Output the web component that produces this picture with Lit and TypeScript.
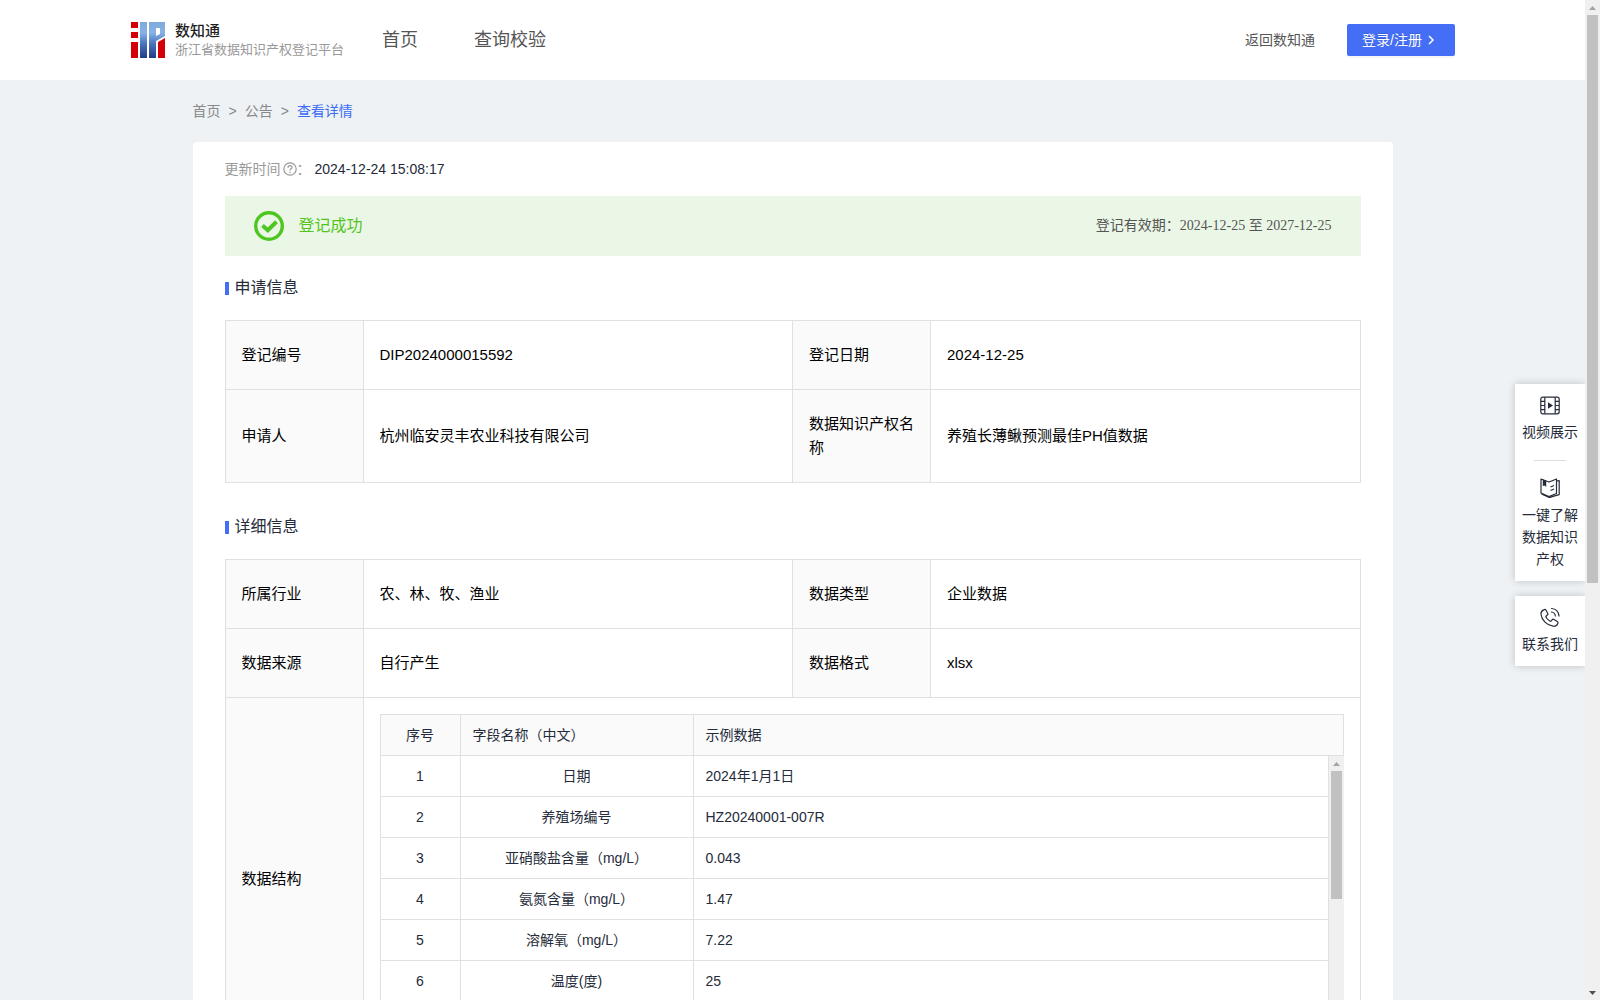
import { LitElement, html, css, svg } from "lit";
import { customElement } from "lit/decorators.js";
import { styleMap } from "lit/directives/style-map.js";

interface FieldRow {
  name: string;
  sample: string;
}

const FIELDS: FieldRow[] = [
  { name: "日期", sample: "2024年1月1日" },
  { name: "养殖场编号", sample: "HZ20240001-007R" },
  { name: "亚硝酸盐含量（mg/L）", sample: "0.043" },
  { name: "氨氮含量（mg/L）", sample: "1.47" },
  { name: "溶解氧（mg/L）", sample: "7.22" },
  { name: "温度(度)", sample: "25" },
];

const icons = {
  logo: svg`<svg class="logo" viewBox="0 0 34 36" aria-hidden="true">
    <defs><linearGradient id="lg" x1="0" y1="0" x2="0" y2="1">
      <stop offset="0" stop-color="#7fa9dc"/><stop offset=".3" stop-color="#86b2e6"/><stop offset=".6" stop-color="#4a74bd"/><stop offset="1" stop-color="#233a86"/>
    </linearGradient></defs>
    <path fill="#d40008" d="M0 0h7v6H0zM0 10h7v6H0zM0 20h7v16H0z"/>
    <path fill="url(#lg)" fill-rule="evenodd" d="M9 0h7v36H9zM18 0h16v14L25 19V36h-7zM25 6v8l4-2V6z"/>
    <path fill="#d40008" d="M27 20l7-4v20h-7z"/>
  </svg>`,
  chevron: svg`<svg class="chevron" viewBox="0 0 8 10" aria-hidden="true"><path d="M2 1l4 4-4 4" fill="none" stroke="currentColor" stroke-width="1.500"/></svg>`,
  help: svg`<svg class="help" viewBox="0 0 14 14" aria-hidden="true">
    <g fill="none" stroke="currentColor" stroke-width="1.200"><circle cx="7" cy="7" r="6.200"/><path d="M5 5.700c0-2.900 4-2.700 4-.3 0 1.400-2 1.500-2 3"/></g><circle cx="7" cy="10.200" r=".8" fill="currentColor"/>
  </svg>`,
  success: svg`<svg class="success" viewBox="0 0 30 30" aria-hidden="true">
    <circle cx="15" cy="15" r="13.300" fill="none" stroke="currentColor" stroke-width="3.400"/>
    <path d="M8.500 14.500l5.300 4.700 8.700-8.500" fill="none" stroke="currentColor" stroke-width="4"/>
  </svg>`,
  video: svg`<svg class="side-icon" viewBox="0 0 20 20" aria-hidden="true">
    <g fill="none" stroke="currentColor" stroke-width="1.200"><rect x=".8" y="2.200" width="18.400" height="16.600" rx="2"/><path d="M4.800 2.200v16.400M15.200 2.200v16.400M1 6.400h3.800M1 10.500h3.800M1 14.600h3.800M15.200 6.400H19M15.200 10.500H19M15.200 14.600H19"/></g>
    <path d="M8 7.300l5 3.200-5 3.200z" fill="currentColor"/>
  </svg>`,
  book: svg`<svg class="side-icon" viewBox="0 0 20 20" aria-hidden="true">
    <g fill="none" stroke="currentColor" stroke-width="1.200" stroke-linejoin="round"><path d="M1 1l8 3 7.500-3v14.500L9 18.500l-8-3.500zM16.500 3l2.700-.4v14L13 18.400l-3.500 1.200L1.500 16M10.500 9l3.500-1.500M10.500 12.500l3.500-1.500"/></g>
    <path d="M2.800 1.500l3.400 1.300V9L4.500 7.500 2.800 8z" fill="currentColor"/>
  </svg>`,
  phone: svg`<svg class="side-icon" viewBox="0 0 20 20" aria-hidden="true">
    <g fill="none" stroke="currentColor" stroke-width="1.200" stroke-linecap="round" stroke-linejoin="round"><path d="M4.300 2.600c-2 .7-3.500 2.400-3.300 4.600.6 6 6 11.200 12 12 2.400.3 4.300-1.200 4.900-3 .2-.8 0-1.300-.6-1.700l-3.300-2c-.7-.4-1.400-.3-1.900.3l-.9 1.100c-.4.4-.8.5-1.300.2-1.600-1-3.200-2.300-4-4-.2-.5-.1-.9.300-1.200l1.100-.8c.6-.5.800-1.200.4-1.800L6 3.200c-.4-.6-1-.9-1.700-.6z"/><path d="M11.500 5c2.200.3 3.600 1.700 3.900 4M11.500 1.500c4.500.3 7 3 7.500 7.500"/></g>
  </svg>`,
};

@customElement("scroll-track")
export class ScrollTrack extends LitElement {
  static properties = { thumb: { type: Number }, down: { type: Boolean } };
  declare thumb: number;
  declare down: boolean;

  static styles = css`
    :host { display: flex; flex-direction: column; width: 15px; background: #f0f0f0; }
    .end { flex: none; height: 15px; display: flex; align-items: center; justify-content: center; }
    .end svg { width: 7px; height: 4px; display: block; }
    .up { color: #a3a3a3; }
    .dn { color: #505050; }
    .lane { flex: 1; min-height: 0; padding: 0 2px; }
    .thumb { background: #c1c1c1; }
  `;

  render() {
    return html`
      <div class="end up"><svg viewBox="0 0 7 4"><path d="M3.500 0L7 4H0z" fill="currentColor"/></svg></div>
      <div class="lane"><div class="thumb" style=${styleMap({ height: `${this.thumb}%` })}></div></div>
      ${this.down ? html`<div class="end dn"><svg viewBox="0 0 7 4"><path d="M0 0h7L3.500 4z" fill="currentColor"/></svg></div>` : ""}
    `;
  }
}

@customElement("app-root")
export class AppRoot extends LitElement {
  static styles = css`
    :host {
      display: flex; height: 100vh; position: relative; overflow: hidden;
      font-family: "Liberation Sans", "Noto Sans CJK SC", sans-serif;
      font-size: 14px; line-height: 22px; color: #252b3a; background: #eef2f5;
    }
    * { box-sizing: border-box; }
    a { color: inherit; text-decoration: none; }
    svg { display: block; flex: none; }
    .page { flex: 1; min-width: 0; overflow-y: auto; scrollbar-width: none; }

    .header { height: 80px; background: #fff; display: flex; align-items: center; padding: 0 130px 0 131px; color: #555; }
    .brand { display: flex; align-items: center; gap: 10px; width: 251px; white-space: nowrap; }
    .logo { width: 34px; height: 36px; }
    .brand-name { font-size: 15px; line-height: 20px; font-weight: 500; color: #1f1f1f; }
    .brand-sub { font-size: 13px; line-height: 18px; color: #999; }
    .nav { display: flex; gap: 56px; font-size: 18px; flex: 1; }
    .login {
      margin-left: 32px; width: 108px; height: 32px; padding: 0 15px; border: 0; border-radius: 2px;
      display: flex; align-items: center; gap: 5px; background: #446ef5; color: #fff; font: inherit;
      white-space: nowrap; box-shadow: 0 2px 0 rgba(0, 0, 0, 0.04); text-shadow: 0 -1px 0 rgba(0, 0, 0, 0.12);
    }
    .chevron { width: 8px; height: 10px; }

    .content { max-width: 1200px; margin: 0 auto; }
    .crumbs { display: flex; gap: 8px; padding: 20px 0; color: #888; }
    .crumbs .current { color: #3a6cf6; }
    .card { background: #fff; border-radius: 4px; padding: 16px 32px 32px; }
    .updated { display: flex; align-items: center; color: #999; }
    .help { width: 14px; height: 14px; margin-left: 2px; }
    .updated time { color: #252b3a; margin-left: 4px; }
    .banner {
      margin-top: 16px; height: 60px; padding: 0 29px; background: #ebf7e6;
      display: flex; align-items: center; gap: 15px; color: #52c41a; font-size: 16px;
    }
    .success { width: 30px; height: 30px; color: #4dc61f; }
    .validity {
      margin-left: auto; font-size: 14px; color: #555;
      font-family: "Liberation Serif", "Noto Sans CJK SC", serif;
    }
    .section-title {
      margin: 20px 0; display: flex; align-items: center; gap: 6px;
      font-size: 16px; line-height: 24px; font-weight: 400;
    }
    .section-title::before { content: ""; width: 4px; height: 13px; background: #446ef5; }
    .info + .section-title { margin-top: 32px; }

    table { border-collapse: collapse; table-layout: fixed; width: 100%; }
    th, td { border: 1px solid #e0e0e0; text-align: left; font-weight: 400; }
    th { background: #fafafa; }
    .info { font-size: 15px; line-height: 24px; color: #000; }
    .info > tbody > tr > th, .info > tbody > tr > td { padding: 22px 15px 22px 16px; }
    .label-col { width: 138px; }
    .info > tbody > tr > .nested { padding: 16px; }

    .fields { color: #252b3a; font-size: 14px; line-height: 22px; }
    .fields th, .fields td { height: 41px; padding: 9px 12px; }
    .fields .no { width: 80px; text-align: center; }
    .fields .name { width: 233px; }
    .fields td.name { text-align: center; }
    .viewport { display: flex; height: 288px; overflow: hidden; }
    .viewport table { flex: 1; align-self: flex-start; width: auto; min-width: 0; }
    .viewport tr:first-child td { border-top: 0; height: 40px; }

    .side { position: absolute; right: 15px; top: 384px; width: 70px; display: flex; flex-direction: column; gap: 15px; }
    .side-card { background: #fff; box-shadow: 0 0 8px rgba(0, 0, 0, 0.2); clip-path: inset(-10px 0 -10px -10px); padding: 11px 7px; }
    .side-link { display: flex; flex-direction: column; align-items: center; gap: 6px; text-align: center; }
    .side-icon { width: 20px; height: 20px; }
    .divider { width: 32px; height: 1px; border: 0; background: #ddd; margin: 17px auto; }
  `;

  private renderFields() {
    return html`
      <div class="fields">
        <table>
          <thead><tr><th class="no">序号</th><th class="name">字段名称（中文）</th><th>示例数据</th></tr></thead>
        </table>
        <div class="viewport">
          <table>
            <colgroup><col class="no" /><col class="name" /><col /></colgroup>
            <tbody>
              ${FIELDS.map((f, i) => html`<tr><td class="no">${i + 1}</td><td class="name">${f.name}</td><td>${f.sample}</td></tr>`)}
            </tbody>
          </table>
          <scroll-track .thumb=${47} aria-hidden="true"></scroll-track>
        </div>
      </div>`;
  }

  private renderCols() {
    return html`<colgroup><col class="label-col" /><col /><col class="label-col" /><col /></colgroup>`;
  }

  render() {
    return html`
      <div class="page">
        <header class="header">
          <div class="brand">
            ${icons.logo}
            <div><div class="brand-name">数知通</div><div class="brand-sub">浙江省数据知识产权登记平台</div></div>
          </div>
          <nav class="nav"><a href="#home">首页</a><a href="#query">查询校验</a></nav>
          <a href="#back">返回数知通</a>
          <button class="login" type="button">登录/注册 ${icons.chevron}</button>
        </header>
        <main class="content">
          <nav class="crumbs">
            <a href="#home">首页</a><span>&gt;</span><a href="#notice">公告</a><span>&gt;</span><a class="current" href="#detail">查看详情</a>
          </nav>
          <div class="card">
            <div class="updated">更新时间${icons.help}：<time>2024-12-24 15:08:17</time></div>
            <div class="banner">
              ${icons.success}<span>登记成功</span>
              <span class="validity">登记有效期：2024-12-25 至 2027-12-25</span>
            </div>
            <h2 class="section-title">申请信息</h2>
            <table class="info">
              ${this.renderCols()}
              <tbody>
                <tr><th>登记编号</th><td>DIP2024000015592</td><th>登记日期</th><td>2024-12-25</td></tr>
                <tr><th>申请人</th><td>杭州临安灵丰农业科技有限公司</td><th>数据知识产权名称</th><td>养殖长薄鳅预测最佳PH值数据</td></tr>
              </tbody>
            </table>
            <h2 class="section-title">详细信息</h2>
            <table class="info">
              ${this.renderCols()}
              <tbody>
                <tr><th>所属行业</th><td>农、林、牧、渔业</td><th>数据类型</th><td>企业数据</td></tr>
                <tr><th>数据来源</th><td>自行产生</td><th>数据格式</th><td>xlsx</td></tr>
                <tr><th>数据结构</th><td class="nested" colspan="3">${this.renderFields()}</td></tr>
              </tbody>
            </table>
          </div>
        </main>
      </div>
      <scroll-track .thumb=${58.6} .down=${true} aria-hidden="true"></scroll-track>
      <aside class="side">
        <div class="side-card">
          <a class="side-link" href="#video">${icons.video}视频展示</a>
          <hr class="divider" />
          <a class="side-link" href="#guide">${icons.book}一键了解数据知识产权</a>
        </div>
        <div class="side-card"><a class="side-link" href="#contact">${icons.phone}联系我们</a></div>
      </aside>
    `;
  }
}
